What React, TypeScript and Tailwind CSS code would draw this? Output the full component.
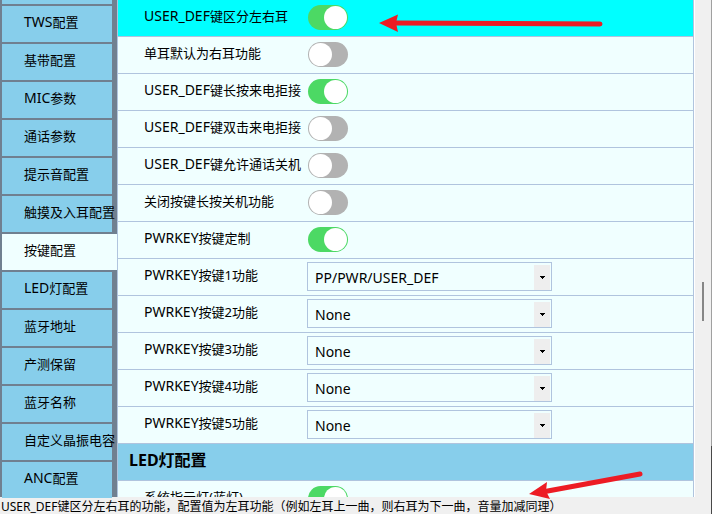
import { useState } from "react";

const navItems = [
  "TWS配置",
  "基带配置",
  "MIC参数",
  "通话参数",
  "提示音配置",
  "触摸及入耳配置",
  "按键配置",
  "LED灯配置",
  "蓝牙地址",
  "产测保留",
  "蓝牙名称",
  "自定义晶振电容",
  "ANC配置",
];

const toggles = [
  { id: "split", label: "USER_DEF键区分左右耳", on: true },
  { id: "single", label: "单耳默认为右耳功能", on: false },
  { id: "long", label: "USER_DEF键长按来电拒接", on: true },
  { id: "double", label: "USER_DEF键双击来电拒接", on: false },
  { id: "calloff", label: "USER_DEF键允许通话关机", on: false },
  { id: "nooff", label: "关闭按键长按关机功能", on: false },
  { id: "custom", label: "PWRKEY按键定制", on: true },
];

const keys = [
  { id: "key1", label: "PWRKEY按键1功能", value: "PP/PWR/USER_DEF" },
  { id: "key2", label: "PWRKEY按键2功能", value: "None" },
  { id: "key3", label: "PWRKEY按键3功能", value: "None" },
  { id: "key4", label: "PWRKEY按键4功能", value: "None" },
  { id: "key5", label: "PWRKEY按键5功能", value: "None" },
];

// Latin runs are set one size larger than the Chinese text around them.
function MixedText({ text }: { text: string }) {
  const latin = text.match(/^[A-Z_]+/)?.[0] ?? "";
  return (
    <>
      {latin && <span className="text-[14px] leading-5">{latin}</span>}
      {text.slice(latin.length)}
    </>
  );
}

function ToggleRow({ id, label, on, selected = false }: { id: string; label: string; on: boolean; selected?: boolean }) {
  return (
    <div className={`flex h-[37px] shrink-0 items-start border-b border-[#b0c4de] pl-[26px] ${selected ? "bg-[#00ffff]" : ""}`}>
      <label htmlFor={id} className="w-[164px] shrink-0 whitespace-nowrap pt-[6px] leading-5">
        <MixedText text={label} />
      </label>
      <input
        id={id}
        type="checkbox"
        defaultChecked={on}
        className="mt-[5px] flex h-[25px] w-10 shrink-0 appearance-none items-center rounded-full bg-[#b2b2b2] px-px before:block before:size-[23px] before:rounded-full before:bg-white checked:justify-end checked:bg-[#4cd964]"
      />
    </div>
  );
}

function SelectRow({ id, label, value }: { id: string; label: string; value: string }) {
  return (
    <div className="flex h-[37px] shrink-0 items-start border-b border-[#b0c4de] pl-[26px]">
      <label htmlFor={id} className="w-[163px] shrink-0 whitespace-nowrap pt-[6px] leading-5">
        <MixedText text={label} />
      </label>
      <div className="relative mt-[3px] h-[29px] w-[245px] shrink-0">
        <select
          id={id}
          defaultValue={value}
          className="size-full appearance-none border border-[#b0c4de] bg-[#f0ffff] pl-[7px] pt-[2px] text-[14px] text-black"
        >
          <option>None</option>
          <option>PP/PWR/USER_DEF</option>
        </select>
        <span className="pointer-events-none absolute bottom-px right-[2px] top-[3px] flex w-4 items-center justify-center bg-[#eeeeee]">
          <svg viewBox="0 0 5 3" className="h-[3px] w-[5px]" aria-hidden="true" shapeRendering="crispEdges">
            <path d="M0 0h5v1h-1v1h-1v1h-1v-1h-1v-1h-1z" fill="#000" />
          </svg>
        </span>
      </div>
    </div>
  );
}

export default function App() {
  const [active, setActive] = useState("按键配置");

  return (
    <div className="relative flex h-screen flex-col overflow-hidden bg-[#f0f0f0] font-['Noto_Sans','Noto_Sans_CJK_SC',sans-serif] text-[13px] text-black">
      <div className="flex min-h-0 flex-1">
        <nav className="flex w-[117px] shrink-0 flex-col gap-[2px] bg-[#708090] pl-[2px]">
          <div className="h-1 w-[110px] shrink-0 bg-[#87ceeb]" />
          {navItems.map((item) => (
            <button
              key={item}
              type="button"
              onClick={() => setActive(item)}
              className={`h-9 shrink-0 whitespace-nowrap pb-1 pl-[22px] text-left leading-5 ${
                item === active ? "w-[115px] bg-[#f0ffff]" : "w-[110px] bg-[#87ceeb]"
              }`}
            >
              <MixedText text={item} />
            </button>
          ))}
        </nav>

        <main className="flex min-w-0 flex-1 flex-col overflow-hidden border-x border-[#b0c4de] bg-[#f0ffff]">
          {toggles.map((row) => (
            <ToggleRow key={row.id} {...row} selected={row.id === "split"} />
          ))}
          {keys.map((row) => (
            <SelectRow key={row.id} {...row} />
          ))}
          <h2 className="h-[37px] shrink-0 border-b border-[#b0c4de] bg-[#87ceeb] pl-[11px] pt-1 text-base font-bold leading-6">
            LED灯配置
          </h2>
          <ToggleRow id="led" label="系统指示灯(蓝灯)" on />
        </main>

        <div className="flex w-[18px] shrink-0 items-start border-l border-white pl-[7px]">
          <div className="mt-[282px] h-[39px] w-[2px] bg-[#868686]" />
        </div>
      </div>

      <footer className="h-[17px] shrink-0 whitespace-nowrap pl-px text-xs leading-5">
        USER_DEF键区分左右耳的功能，配置值为左耳功能（例如左耳上一曲，则右耳为下一曲，音量加减同理）
      </footer>

      <div className="absolute inset-y-0 right-0 flex w-px flex-col">
        <div className="h-[446px] bg-[#a0a0a0]" />
        <div className="flex-1 bg-[#484848]" />
      </div>

      <svg className="pointer-events-none absolute left-0 top-0 h-[514px] w-[712px]" viewBox="0 0 712 514" aria-hidden="true">
        <g fill="#ed1c24" stroke="#ed1c24" strokeLinecap="round">
          <path d="M395 23L600 24" strokeWidth="5" />
          <path d="M379 23L398 14.5L396 23L398 32Z" stroke="none" />
          <path d="M545 491.5L640 474" strokeWidth="5" />
          <path d="M529 494L547 482L546 491L550 499Z" stroke="none" />
        </g>
      </svg>
    </div>
  );
}
